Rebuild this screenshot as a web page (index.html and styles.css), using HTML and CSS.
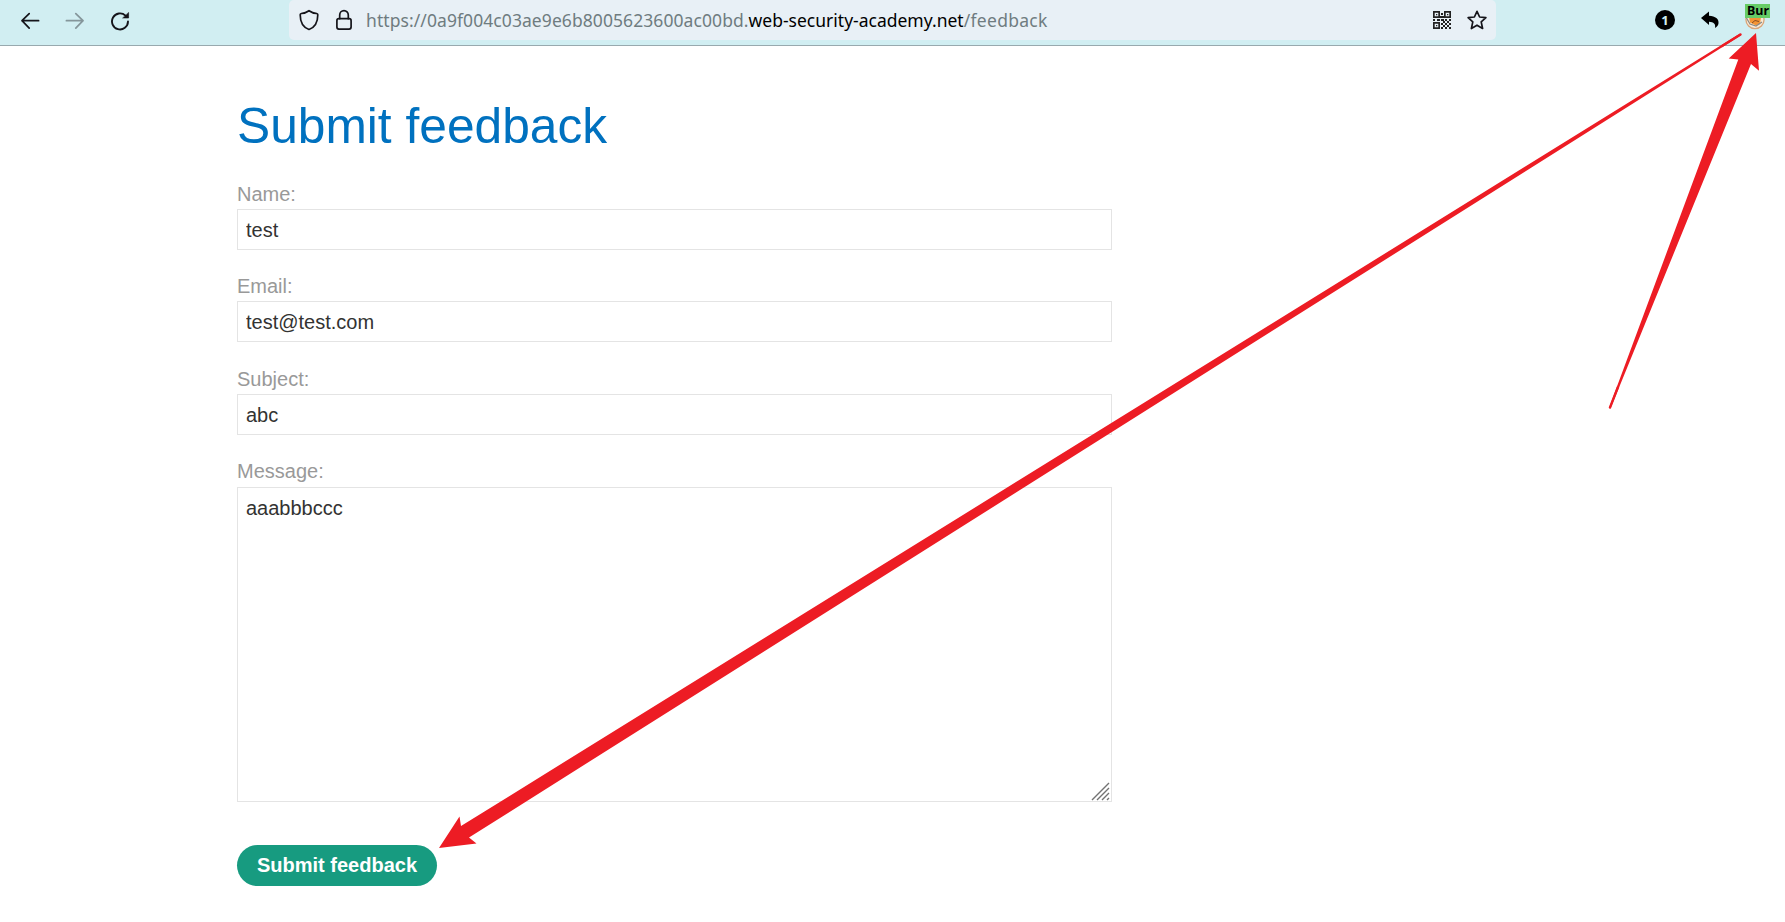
FILE: index.html
```html
<!DOCTYPE html>
<html lang="en">
<head>
<meta charset="utf-8">
<title>Submit feedback</title>
<link rel="stylesheet" href="styles.css">
</head>
<body>
<header class="toolbar">
  <nav class="nav-buttons">
    <svg class="icon" width="20" height="20" viewBox="0 0 20 20"><path d="M18.600 9.700H2M9.200 2.600L2 9.700l7.200 7.400"/></svg>
    <svg class="icon icon-dim" width="20" height="20" viewBox="0 0 20 20"><path d="M1.400 9.700H18M10.800 2.600L18 9.700l-7.200 7.400"/></svg>
    <svg class="icon icon-reload" width="20" height="20" viewBox="0 0 20 20"><path d="M18 10.500A8 8 0 1 1 15.500 4.600"/><path class="solid" d="M18.600 1.800v5.200h-5.600z"/></svg>
  </nav>
  <div class="address">
    <svg class="icon icon-shield" width="20" height="22" viewBox="0 0 20 22"><path d="M10 1.700C7.500 3.500 4.800 4.300 2.300 4.500c-.7.100-1.100.5-1.100 1.200C1.200 12.500 4 18.300 10 20.500c6-2.200 8.800-8 8.800-14.800 0-.7-.4-1.100-1.100-1.200C15.200 4.300 12.500 3.500 10 1.700z"/></svg>
    <svg class="icon icon-lock" width="18" height="22" viewBox="0 0 18 22"><rect x="1.900" y="9.700" width="14.200" height="10.400" rx="2"/><path d="M4.700 9.700V5.900a4.300 4.300 0 0 1 8.600 0v3.800"/></svg>
    <div class="url"><span class="url-sub">https://0a9f004c03ae9e6b8005623600ac00bd.</span><span class="url-host">web-security-academy.net</span><span class="url-path">/feedback</span></div>
    <svg class="icon-qr" width="18" height="18" viewBox="0 0 18 18"><path fill-rule="evenodd" d="M0 0h7v7H0zM1.700 1.700v3.600h3.600V1.700zM11 0h7v7h-7zM12.700 1.700v3.600h3.600V1.700zM0 11h7v7H0zM1.700 12.700v3.600h3.600v-3.600zM3 3h1.300v1.300H3zM14 3h1.300v1.300H14zM3 14h1.300v1.300H3zM8 2h2v2H8zM7 5h4v2H7zM0 8h2v2H0zM4 8h3v2H4zM8 8h3v2H8zM12 8h2v2h-2zM16 8h2v2h-2zM10 10h2v2h-2zM14 10h2v2h-2zM8 12h2v2H8zM12 12h2v2h-2zM16 12h2v2h-2zM10 14h2v2h-2zM14 14h2v2h-2zM8 16h2v2H8zM12 16h2v2h-2zM16 16h2v2h-2z"/></svg>
    <svg class="icon icon-star" width="20" height="20" viewBox="0 0 20 20"><path d="M10 1.300l2.600 5.700 6.300.7-4.700 4.200 1.400 6.600-5.600-3.300-5.600 3.300 1.400-6.600L1.100 7.700l6.300-.7z"/></svg>
  </div>
  <div class="extensions">
    <span class="count">1</span>
    <svg class="icon-undo" width="18" height="18" viewBox="0 0 18 18"><path d="M0 7L8 .5v4.200c6.500.3 10 3.200 9.500 7.600-.2 2-1.500 3.700-3.500 4.700.9-3.900-1.300-6-6-6.200V14z"/></svg>
    <div class="proxy">
      <svg width="20" height="20" viewBox="0 0 20 20"><circle cx="10" cy="9.500" r="9.100" fill="#f8ead8" stroke="#dba477" stroke-width="1.300"/><path d="M4 7h12l-1 7-4 1.500-6-3z" fill="#f49535"/><path d="M1.500 8l3.500 6 6 2 6-4" fill="none" stroke="#8c8a84" stroke-width="1.200"/><path d="M7 13l3-2.500 4 1" fill="none" stroke="#8a4e20"/></svg>
      <span class="badge">Bur</span>
    </div>
  </div>
</header>
<main class="page">
  <h1 class="title">Submit feedback</h1>
  <form class="form">
    <div class="field"><label class="label" for="name">Name:</label><input class="input" id="name" value="test"></div>
    <div class="field"><label class="label" for="email">Email:</label><input class="input" id="email" value="test@test.com"></div>
    <div class="field"><label class="label" for="subject">Subject:</label><input class="input" id="subject" value="abc"></div>
    <div class="field"><label class="label label-message" for="message">Message:</label>
      <div class="message-box"><textarea class="input message" id="message">aaabbbccc</textarea>
      <svg class="grip" width="19" height="19" viewBox="0 0 19 19"><path d="M1 18L18 1M6 18L18 6M11 18l7-7M16 18l2-2"/></svg></div>
    </div>
    <button class="submit" type="button">Submit feedback</button>
  </form>
</main>
<svg class="arrows" width="1785" height="922" viewBox="0 0 1785 922">
  <path d="M1740 33.500L1741.200 35.200 469 837.500 476.500 843.500 439 848 459.500 816.500 461 826z"/>
  <path d="M1609 408L1738.300 59.500 1728.700 58.500 1756 33 1759 70.700 1751 64 1610.500 408.500z"/>
  <path class="tail" d="M1610 407.500L1618 387M1740.500 34.500L1722 46"/>
</svg>
</body>
</html>
```
FILE: styles.css
```css
* { box-sizing: border-box; }
body {
  margin: 0;
  height: 922px;
  overflow: hidden;
  background: #fff;
  font-family: "Liberation Sans", Arial, sans-serif;
  font-size: 20px;
}
.toolbar {
  display: flex;
  height: 46px;
  padding-left: 20px;
  background: #d1eef2;
  border-bottom: 1px solid #98a9ae;
}
.nav-buttons {
  display: flex;
  gap: 25px;
  width: 269px;
  padding-top: 11px;
}
.icon {
  flex: none;
  fill: none;
  stroke: #15141a;
  stroke-width: 1.7;
  stroke-linejoin: round;
  stroke-linecap: round;
}
.icon-dim { opacity: .4; }
.icon-reload { stroke-width: 1.9; }
.solid { fill: #15141a; stroke-width: 0.6; }
.address {
  display: flex;
  align-items: center;
  width: 1207px;
  height: 40px;
  padding-left: 10px;
  background: #e8f0f6;
  border-radius: 5px;
}
.icon-shield, .icon-lock { position: relative; top: -0.5px; }
.icon-lock { margin-left: 16px; }
.url {
  flex: 1;
  margin-left: 13px;
  font-family: "Noto Sans", sans-serif;
  font-size: 17.500px;
  line-height: 41px;
  white-space: nowrap;
  color: #6f7c80;
}
.url-sub { letter-spacing: 0.075px; }
.url-host { color: #000; }
.url-path { letter-spacing: 0.3px; }
.icon-qr { fill: #222; }
.icon-star { margin: 0 9px 0 16px; }
.extensions {
  display: flex;
  align-items: center;
  height: 40px;
  margin-left: 159px;
}
.count {
  width: 20px;
  height: 20px;
  border-radius: 50%;
  background: #000;
  color: #d1eef2;
  font: bold 13px/20px "Noto Sans", sans-serif;
  text-align: center;
}
.icon-undo { margin-left: 26px; }
.proxy {
  position: relative;
  width: 20px;
  height: 20px;
  margin-left: 26px;
}
.badge {
  position: absolute;
  top: -6px;
  left: 0;
  width: 25px;
  height: 14px;
  padding-left: 2px;
  background: #66cc66;
  color: #000;
  font: bold 12.500px/13px "Noto Sans", sans-serif;
}
.page {
  width: 875px;
  margin-left: 237px;
  padding-top: 51px;
}
.title {
  margin: 0;
  font-size: 49.700px;
  font-weight: 400;
  line-height: 59px;
  color: #0071bf;
}
.form { padding-top: 24px; }
.field { height: 92.400px; padding-top: 2px; }
.label {
  display: block;
  height: 27px;
  line-height: 25px;
  color: #999;
}
.label-message { height: 28px; }
.input {
  display: block;
  width: 100%;
  height: 41px;
  padding: 2px 8px 0;
  border: 1px solid #e4e4e4;
  border-radius: 0;
  outline: none;
  background: #fff;
  color: #333332;
  font: 20px "Liberation Sans", Arial, sans-serif;
}
.message-box { position: relative; }
.message { height: 315px; padding-top: 9px; resize: none; overflow: hidden; }
.grip {
  position: absolute;
  right: 2px;
  bottom: 1px;
  fill: none;
  stroke: #737373;
  stroke-width: 1.400;
}
.submit {
  display: block;
  width: 200px;
  height: 41px;
  margin-top: 295.400px;
  padding: 0;
  border: 0;
  border-radius: 21px;
  background: #179b80;
  color: #fff;
  font: bold 20px/41px "Liberation Sans", Arial, sans-serif;
}
.arrows {
  position: absolute;
  top: 0;
  left: 0;
  fill: #ed1c24;
  pointer-events: none;
}
.tail {
  stroke: #ed1c24;
  stroke-width: 2.400;
  stroke-linecap: round;
}
```
